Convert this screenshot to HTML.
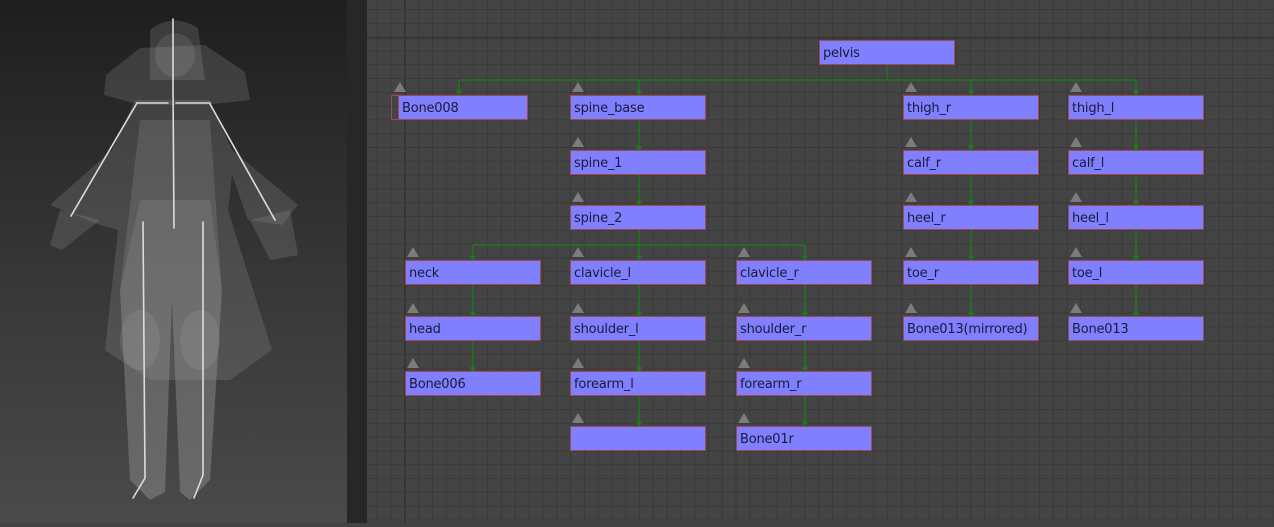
<!DOCTYPE html>
<html><head><meta charset="utf-8"><style>
html,body{margin:0;padding:0;width:1274px;height:523px;overflow:hidden;background:#424242;font-family:"DejaVu Sans","Liberation Sans",sans-serif}
#left{position:absolute;left:0;top:0;width:347px;height:523px;background:linear-gradient(#1e1e1e,#2f2f2f 35%,#4a4a4a)}
#strip{position:absolute;left:347px;top:0;width:20px;height:523px;background:#272727}
#grid{position:absolute;left:367px;top:0;width:907px;height:523px;background-color:#444;
background-image:linear-gradient(90deg,#3a3a3a 1px,transparent 1px),linear-gradient(#3a3a3a 1px,transparent 1px);
background-size:13.8px 13.8px;background-position:-4px 9px}
.maj{position:absolute;background:#363636}
.n{position:absolute;width:134px;height:23px;background:#8080ff;border:1px solid #a04858;color:#1a1a3a;font-size:13px;line-height:25px;box-sizing:content-box}
.n span{position:absolute;left:3px;top:0;letter-spacing:-0.2px}
.t{position:absolute;width:0;height:0;border-left:6px solid transparent;border-right:6px solid transparent;border-bottom:10px solid #7c7c7c}
</style></head><body>
<div id="left">
<svg width="347" height="523" viewBox="0 0 347 523">
<g fill="#a0a0a0" fill-opacity="0.22">
<path d="M150 30 Q173 12 198 28 L205 80 L150 80 Z"/>
<path d="M106 75 L140 48 L205 45 L245 72 L250 100 L205 105 L140 105 L104 95 Z"/>
<path d="M135 100 L210 100 L232 150 L298 205 L282 225 L248 220 L232 175 L228 210 L272 350 L230 380 L150 380 L105 350 L118 230 L100 225 L50 205 L112 150 Z"/>
<path d="M140 120 L210 120 L222 290 L210 480 L190 500 L180 492 L172 300 L165 492 L150 500 L130 480 L120 290 Z"/>
<path d="M140 200 L210 200 L222 290 L210 480 L190 500 L180 492 L172 300 L165 492 L150 500 L130 480 L120 290 Z"/>
<path d="M60 210 L100 220 L62 250 L50 245 Z"/>
<path d="M250 220 L290 210 L298 255 L270 260 Z"/>
</g>
<g fill="#bbbbbb" fill-opacity="0.15">
<ellipse cx="140" cy="340" rx="20" ry="30"/><ellipse cx="200" cy="340" rx="20" ry="30"/>
<ellipse cx="175" cy="55" rx="20" ry="22"/>
</g>
<g stroke="#dcdcdc" stroke-width="1.6" fill="none" stroke-linecap="round">
<path d="M173 19 L173 88 L174 228"/>
<path d="M137 103 L168 103 M176 103 L210 103"/>
<path d="M137 103 L71 216"/>
<path d="M210 104 L275 220"/>
<path d="M143 222 L145 478 L133 498"/>
<path d="M203 222 L203 475 L194 498"/>
</g>
</svg>
</div>
<div id="strip"></div>
<div id="grid"></div>
<div class="maj" style="left:367px;top:37px;width:907px;height:2px"></div>
<div class="maj" style="left:404px;top:0;width:2px;height:523px"></div>

<svg style="position:absolute;left:0;top:0" width="1274" height="523">
<g stroke="#1c7a1c" stroke-width="1.5" fill="none">
<path d="M887 65 V80 M459 80 H1136 M459 80 V95 M639 80 V95 M971 80 V95 M1136 80 V95"/>
<path d="M639 120 V150 M639 175 V205 M639 230 V245 M473 245 H805 M473 245 V260 M639 245 V260 M805 245 V260"/>
<path d="M473 285 V316 M473 341 V371 M639 285 V316 M639 341 V371 M639 396 V426 M805 285 V316 M805 341 V371 M805 396 V426"/>
<path d="M971 120 V150 M971 175 V205 M971 230 V260 M971 285 V316 M1136 120 V150 M1136 175 V205 M1136 230 V260 M1136 285 V316"/>
</g>
<g fill="#1c7a1c">
<path d="M459 89 l3 3 -3 3 -3 -3z M639 89 l3 3 -3 3 -3 -3z M971 89 l3 3 -3 3 -3 -3z M1136 89 l3 3 -3 3 -3 -3z"/>
<path d="M639 144 l3 3 -3 3 -3 -3z M639 199 l3 3 -3 3 -3 -3z M971 144 l3 3 -3 3 -3 -3z M971 199 l3 3 -3 3 -3 -3z M971 254 l3 3 -3 3 -3 -3z M971 310 l3 3 -3 3 -3 -3z M1136 144 l3 3 -3 3 -3 -3z M1136 199 l3 3 -3 3 -3 -3z M1136 254 l3 3 -3 3 -3 -3z M1136 310 l3 3 -3 3 -3 -3z"/>
<path d="M473 254 l3 3 -3 3 -3 -3z M639 254 l3 3 -3 3 -3 -3z M805 254 l3 3 -3 3 -3 -3z M473 310 l3 3 -3 3 -3 -3z M473 365 l3 3 -3 3 -3 -3z M639 310 l3 3 -3 3 -3 -3z M639 365 l3 3 -3 3 -3 -3z M639 420 l3 3 -3 3 -3 -3z M805 310 l3 3 -3 3 -3 -3z M805 365 l3 3 -3 3 -3 -3z M805 420 l3 3 -3 3 -3 -3z"/>
</g>
</svg>

<div class="n" style="left:819px;top:40px"><span>pelvis</span></div>

<div class="t" style="left:394px;top:82px"></div>
<div style="position:absolute;left:391px;top:95px;width:8px;height:23px;border:1px solid #a04858;border-right:none"></div>
<div class="n" style="left:398px;top:95px;width:128px"><span>Bone008</span></div>

<div class="t" style="left:572px;top:82px"></div><div class="n" style="left:570px;top:95px"><span>spine_base</span></div>
<div class="t" style="left:905px;top:82px"></div><div class="n" style="left:903px;top:95px"><span>thigh_r</span></div>
<div class="t" style="left:1070px;top:82px"></div><div class="n" style="left:1068px;top:95px"><span>thigh_l</span></div>

<div class="t" style="left:572px;top:137px"></div><div class="n" style="left:570px;top:150px"><span>spine_1</span></div>
<div class="t" style="left:905px;top:137px"></div><div class="n" style="left:903px;top:150px"><span>calf_r</span></div>
<div class="t" style="left:1070px;top:137px"></div><div class="n" style="left:1068px;top:150px"><span>calf_l</span></div>

<div class="t" style="left:572px;top:192px"></div><div class="n" style="left:570px;top:205px"><span>spine_2</span></div>
<div class="t" style="left:905px;top:192px"></div><div class="n" style="left:903px;top:205px"><span>heel_r</span></div>
<div class="t" style="left:1070px;top:192px"></div><div class="n" style="left:1068px;top:205px"><span>heel_l</span></div>

<div class="t" style="left:407px;top:247px"></div><div class="n" style="left:405px;top:260px"><span>neck</span></div>
<div class="t" style="left:572px;top:247px"></div><div class="n" style="left:570px;top:260px"><span>clavicle_l</span></div>
<div class="t" style="left:738px;top:247px"></div><div class="n" style="left:736px;top:260px"><span>clavicle_r</span></div>
<div class="t" style="left:905px;top:247px"></div><div class="n" style="left:903px;top:260px"><span>toe_r</span></div>
<div class="t" style="left:1070px;top:247px"></div><div class="n" style="left:1068px;top:260px"><span>toe_l</span></div>

<div class="t" style="left:407px;top:303px"></div><div class="n" style="left:405px;top:316px"><span>head</span></div>
<div class="t" style="left:572px;top:303px"></div><div class="n" style="left:570px;top:316px"><span>shoulder_l</span></div>
<div class="t" style="left:738px;top:303px"></div><div class="n" style="left:736px;top:316px"><span>shoulder_r</span></div>
<div class="t" style="left:905px;top:303px"></div><div class="n" style="left:903px;top:316px"><span>Bone013(mirrored)</span></div>
<div class="t" style="left:1070px;top:303px"></div><div class="n" style="left:1068px;top:316px"><span>Bone013</span></div>

<div class="t" style="left:407px;top:358px"></div><div class="n" style="left:405px;top:371px"><span>Bone006</span></div>
<div class="t" style="left:572px;top:358px"></div><div class="n" style="left:570px;top:371px"><span>forearm_l</span></div>
<div class="t" style="left:738px;top:358px"></div><div class="n" style="left:736px;top:371px"><span>forearm_r</span></div>

<div class="t" style="left:572px;top:413px"></div><div class="n" style="left:570px;top:426px"></div>
<div class="t" style="left:738px;top:413px"></div><div class="n" style="left:736px;top:426px"><span>Bone01r</span></div>
</body></html>
